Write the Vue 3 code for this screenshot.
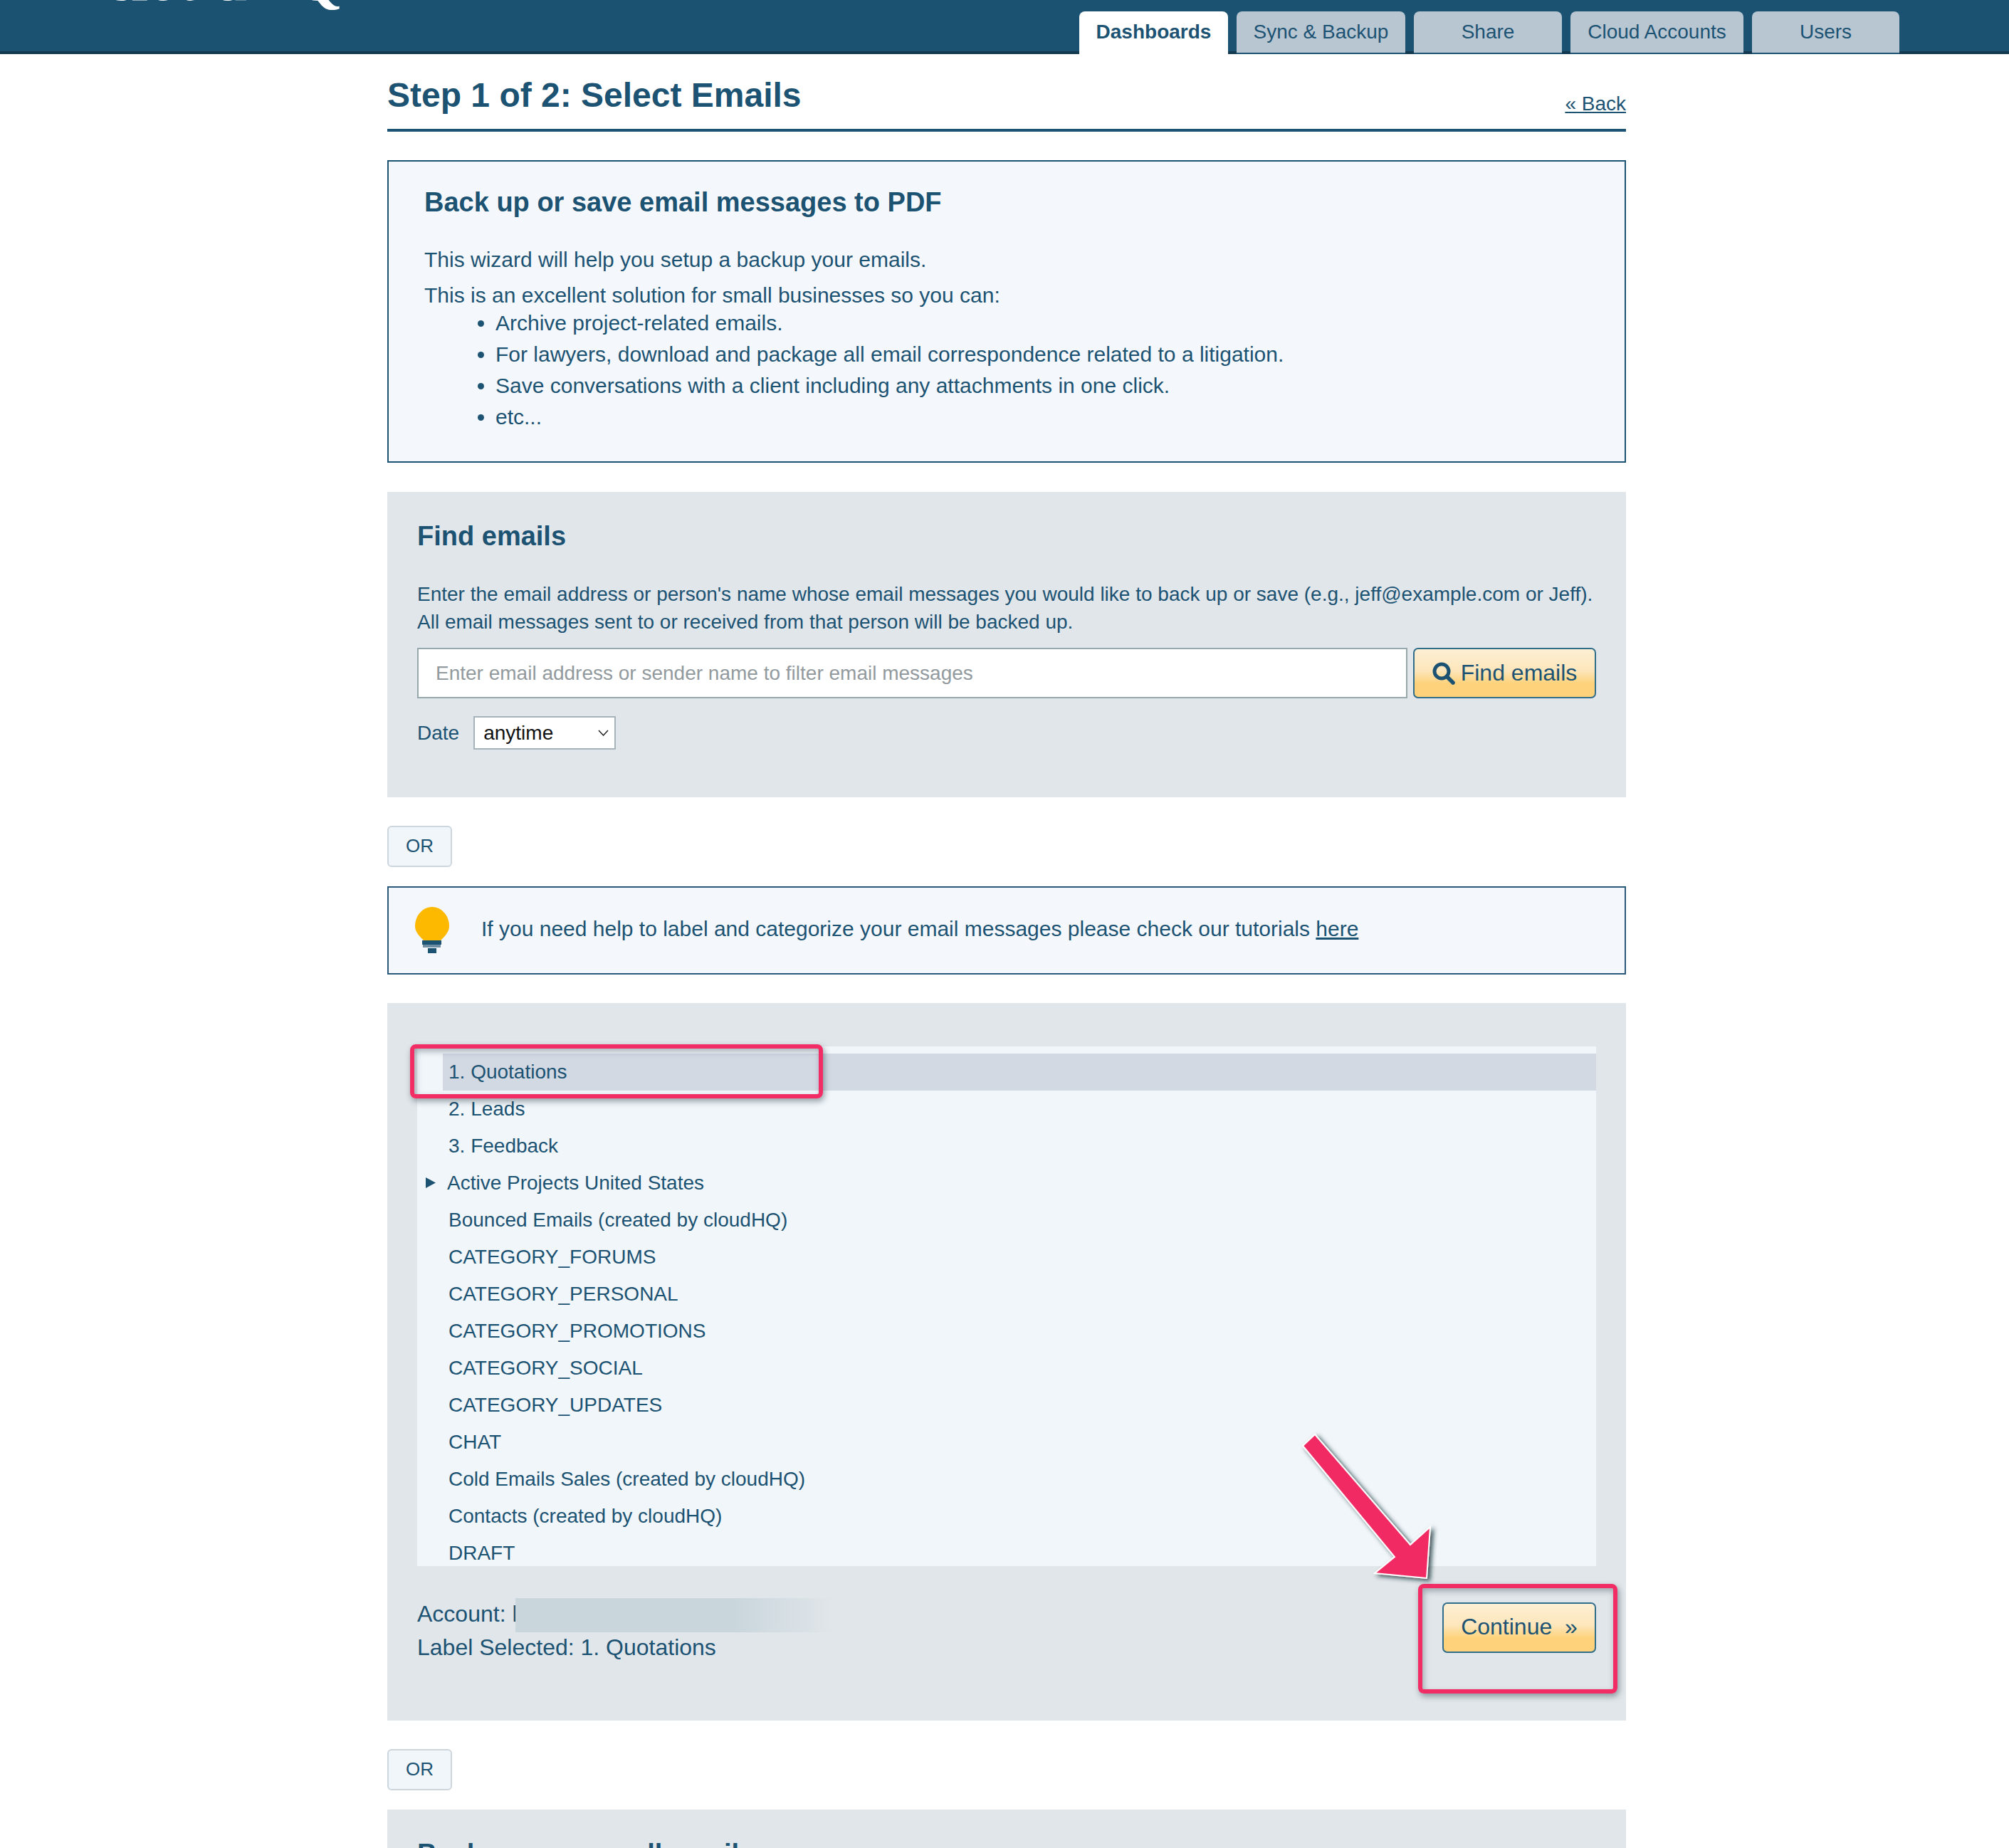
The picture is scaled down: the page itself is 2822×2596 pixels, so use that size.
<script setup>
const tabs = ['Dashboards', 'Sync & Backup', 'Share', 'Cloud Accounts', 'Users']
const tabWidths = [209, 237, 208, 243, 207]
const bullets = [
  'Archive project-related emails.',
  'For lawyers, download and package all email correspondence related to a litigation.',
  'Save conversations with a client including any attachments in one click.',
  'etc...'
]
const labels = [
  '1. Quotations', '2. Leads', '3. Feedback', 'Active Projects United States',
  'Bounced Emails (created by cloudHQ)', 'CATEGORY_FORUMS', 'CATEGORY_PERSONAL',
  'CATEGORY_PROMOTIONS', 'CATEGORY_SOCIAL', 'CATEGORY_UPDATES', 'CHAT',
  'Cold Emails Sales (created by cloudHQ)', 'Contacts (created by cloudHQ)', 'DRAFT'
]
</script>

<template>
  <div class="page">
    <header class="top">
      <span class="logo">cloudHQ</span>
      <nav class="tabs">
        <a
          v-for="(t, i) in tabs"
          :key="t"
          class="tab"
          :class="{ active: i === 0 }"
          :style="{ width: tabWidths[i] + 'px' }"
        >{{ t }}</a>
      </nav>
    </header>

    <main class="main">
      <div class="title-row">
        <h1>Step 1 of 2: Select Emails</h1>
        <a class="back">« Back</a>
      </div>

      <section class="intro">
        <h2>Back up or save email messages to PDF</h2>
        <p class="p1">This wizard will help you setup a backup your emails.</p>
        <p class="p2">This is an excellent solution for small businesses so you can:</p>
        <ul>
          <li v-for="b in bullets" :key="b">{{ b }}</li>
        </ul>
      </section>

      <section class="find">
        <h2>Find emails</h2>
        <p class="find-text">Enter the email address or person's name whose email messages you would like to back up or save (e.g., jeff@example.com or Jeff).<br>All email messages sent to or received from that person will be backed up.</p>
        <div class="search">
          <input class="input" placeholder="Enter email address or sender name to filter email messages">
          <button class="btn find-btn">
            <svg class="mag" viewBox="0 0 32 32" width="32" height="32">
              <circle cx="13" cy="13" r="10" fill="none" stroke="#1c5272" stroke-width="5"/>
              <path d="M20.5 20.5 L29 29" stroke="#1c5272" stroke-width="5.5" stroke-linecap="round"/>
            </svg>
            Find emails
          </button>
        </div>
        <div class="date-row">
          <span>Date</span>
          <div class="select">anytime
            <svg viewBox="0 0 15 9" width="15" height="9"><path d="M1 1 L7.5 8 L14 1" fill="none" stroke="#222" stroke-width="1.5"/></svg>
          </div>
        </div>
      </section>

      <div class="or first-or">OR</div>

      <section class="tip">
        <svg class="bulb" viewBox="0 0 48 65" width="48" height="65">
          <path d="M24 0 C37 0 48 12 48 27 C48 35 42 41 36 47 H12 C6 41 0 35 0 27 C0 12 11 0 24 0 Z" fill="#fdb900"/>
          <rect x="10" y="47" width="27" height="6" fill="#1c5272"/>
          <rect x="11" y="53" width="25" height="4" fill="#6f8ea3"/>
          <rect x="18" y="58" width="12" height="7" fill="#1c5272"/>
        </svg>
        <span class="tip-text">If you need help to label and categorize your email messages please check our tutorials <a>here</a></span>
      </section>

      <section class="labels">
        <div class="list">
          <div
            v-for="(l, i) in labels"
            :key="l"
            class="row"
            :class="{ selected: i === 0 }"
          >
            <svg v-if="i === 3" class="caret" viewBox="0 0 14 15" width="14" height="15"><path d="M0 0 L14 7.5 L0 15 Z" fill="#1c5272"/></svg>
            <span :class="{ shifted: i === 3 }">{{ l }}</span>
          </div>
        </div>
        <div class="foot">
          <div class="info">
            <div class="account">Account: l<span class="blur"></span></div>
            <div>Label Selected: 1. Quotations</div>
          </div>
          <button class="btn cont-btn">Continue&nbsp; »</button>
        </div>
      </section>

      <div class="or second-or">OR</div>

      <section class="last">
        <h2>Back up or save all emails</h2>
      </section>

      <div class="mark mark-label"></div>
      <div class="mark mark-cont"></div>
      <svg class="arrow" viewBox="0 0 200 220" width="200" height="220">
        <defs>
          <filter id="arrow-shadow" x="-20%" y="-20%" width="140%" height="140%">
            <feDropShadow dx="4" dy="3" stdDeviation="3" flood-color="#0c2a33" flood-opacity="0.8"/>
          </filter>
        </defs>
        <path d="M23 5 L6 21 L135 177 L107 200 L180 207 L185 135 L157 160 Z" fill="#f22c64" stroke="#fff" stroke-width="2" filter="url(#arrow-shadow)"/>
      </svg>
    </main>
  </div>
</template>

<style>
html, body { margin: 0; background: #fff; }
</style>

<style scoped>
.page {
  width: 2822px;
  height: 2596px;
  overflow: hidden;
  font-family: "Liberation Sans", Arial, sans-serif;
  color: #1c5272;
  background: #fff;
}
.top {
  position: relative;
  height: 72px;
  background: #1b5272;
  border-bottom: 4px solid #143a52;
  box-sizing: content-box;
  display: flex;
  justify-content: flex-end;
  align-items: flex-end;
  padding-right: 154px;
}
.logo {
  position: absolute;
  left: 146px;
  top: -71px;
  font: bold 86px/84px "Liberation Serif", serif;
  color: #fff;
}
.tabs {
  display: flex;
  gap: 12px;
  margin-bottom: -4px;
}
.tab {
  height: 60px;
  line-height: 58px;
  box-sizing: border-box;
  text-align: center;
  font-size: 28px;
  color: #1c5272;
  background: #b8c6d2;
  border-radius: 8px 8px 0 0;
  border-bottom: 2px solid #1c5272;
}
.tab.active {
  background: #fff;
  font-weight: bold;
  border-bottom: 0;
}
.main {
  position: relative;
  width: 1740px;
  margin: 0 0 0 544px;
}
.title-row {
  height: 109px;
  box-sizing: border-box;
  border-bottom: 4px solid #1c5272;
  display: flex;
  justify-content: space-between;
  align-items: flex-start;
}
h1 {
  margin: 29px 0 0;
  font-size: 48px;
  line-height: 58px;
  font-weight: bold;
}
.back {
  margin-top: 50px;
  font-size: 28px;
  line-height: 40px;
  text-decoration: underline;
}
h2 {
  margin: 0;
  font-size: 38px;
  line-height: 44px;
  font-weight: bold;
}
.intro {
  margin-top: 40px;
  height: 425px;
  box-sizing: border-box;
  border: 2px solid #1c5272;
  background: #f4f8fc;
  padding: 35px 0 0 50px;
  font-size: 30px;
}
.p1 { margin: 37px 0 0; line-height: 44px; }
.p2 { margin: 6px 0 0; line-height: 44px; }
.intro ul { margin: -5px 0 0; padding: 0 0 0 100px; }
.intro li { line-height: 44px; }
.find {
  margin-top: 41px;
  height: 429px;
  box-sizing: border-box;
  background: #e1e6ea;
  padding: 40px 42px 0;
}
.find-text {
  margin: 40px 0 0;
  font-size: 28px;
  line-height: 39px;
}
.search {
  display: flex;
  gap: 8px;
  margin-top: 17px;
  height: 71px;
}
.input {
  flex: 1;
  min-width: 0;
  box-sizing: border-box;
  height: 71px;
  padding: 0 24px;
  border: 2px solid #97a8ad;
  background: #fff;
  outline: 0;
  font: 28px "Liberation Sans", Arial, sans-serif;
  color: #1c5272;
}
.input::placeholder { color: #929a9e; opacity: 1; }
.btn {
  box-sizing: border-box;
  border: 2px solid #2f6d8b;
  border-radius: 7px;
  background: linear-gradient(#fdefd4 0%, #fde6bb 45%, #fdd27a 72%, #fdd27a 100%);
  color: #1c5272;
  font: 32px "Liberation Sans", Arial, sans-serif;
  padding: 0;
  display: flex;
  align-items: center;
  justify-content: center;
}
.find-btn { width: 257px; height: 71px; gap: 8px; }
.mag { flex: none; }
.date-row {
  display: flex;
  align-items: center;
  gap: 20px;
  margin-top: 25px;
  font-size: 28px;
  height: 47px;
}
.select {
  width: 200px;
  height: 47px;
  box-sizing: border-box;
  border: 2px solid #a7b3ba;
  background: #fff;
  color: #111;
  padding: 0 8px 0 12px;
  display: flex;
  align-items: center;
  justify-content: space-between;
}
.or {
  width: 91px;
  height: 58px;
  box-sizing: border-box;
  border: 2px solid #cdd6dc;
  border-radius: 6px;
  background: #f1f6fa;
  font-size: 26px;
  line-height: 53px;
  text-align: center;
}
.first-or { margin-top: 40px; }
.second-or { margin-top: 40px; }
.tip {
  margin-top: 27px;
  height: 124px;
  box-sizing: border-box;
  border: 2px solid #2a5878;
  background: #f4f8fc;
  display: flex;
  align-items: center;
  padding-left: 37px;
  gap: 45px;
  font-size: 30px;
}
.tip-text { margin-bottom: 5px; }
.tip a { text-decoration: underline; }
.bulb { flex: none; margin-bottom: 2px; }
.labels {
  margin-top: 40px;
  height: 1008px;
  box-sizing: border-box;
  background: #e1e6ea;
  padding: 61px 42px 0;
}
.list {
  height: 730px;
  overflow: hidden;
  background: #f1f6fa;
  padding-top: 10px;
  box-sizing: border-box;
  font-size: 28px;
}
.row {
  position: relative;
  height: 52px;
  line-height: 52px;
  padding-left: 44px;
  box-sizing: border-box;
}
.row.selected {
  margin-left: 36px;
  padding-left: 8px;
  background: #d2d9e3;
}
.caret {
  position: absolute;
  left: 12px;
  top: 18px;
}
.shifted { margin-left: -2px; }
.foot {
  display: flex;
  justify-content: space-between;
  align-items: flex-start;
  margin-top: 44px;
  font-size: 32px;
  line-height: 47px;
}
.account { position: relative; }
.blur {
  position: absolute;
  left: 138px;
  top: 1px;
  width: 448px;
  height: 48px;
  background: linear-gradient(90deg, #c9d6dc 0%, #c9d6dc 68%, #e1e6ea 100%);
}
.cont-btn {
  width: 216px;
  height: 71px;
  margin-top: 7px;
  padding-bottom: 2px;
}
.last {
  margin-top: 27px;
  height: 200px;
  background: #e1e6ea;
  padding: 40px 42px 0;
}
.mark {
  position: absolute;
  box-sizing: border-box;
  border: 6px solid #f22c64;
  border-radius: 8px;
  box-shadow: 2px 4px 8px rgba(30, 50, 60, 0.45), inset 2px 4px 8px rgba(30, 50, 60, 0.35);
  pointer-events: none;
}
.mark-label {
  left: 32px;
  top: 1391px;
  width: 580px;
  height: 76px;
}
.mark-cont {
  left: 1448px;
  top: 2149px;
  width: 280px;
  height: 154px;
}
.arrow {
  position: absolute;
  left: 1280px;
  top: 1934px;
  overflow: visible;
}
</style>
